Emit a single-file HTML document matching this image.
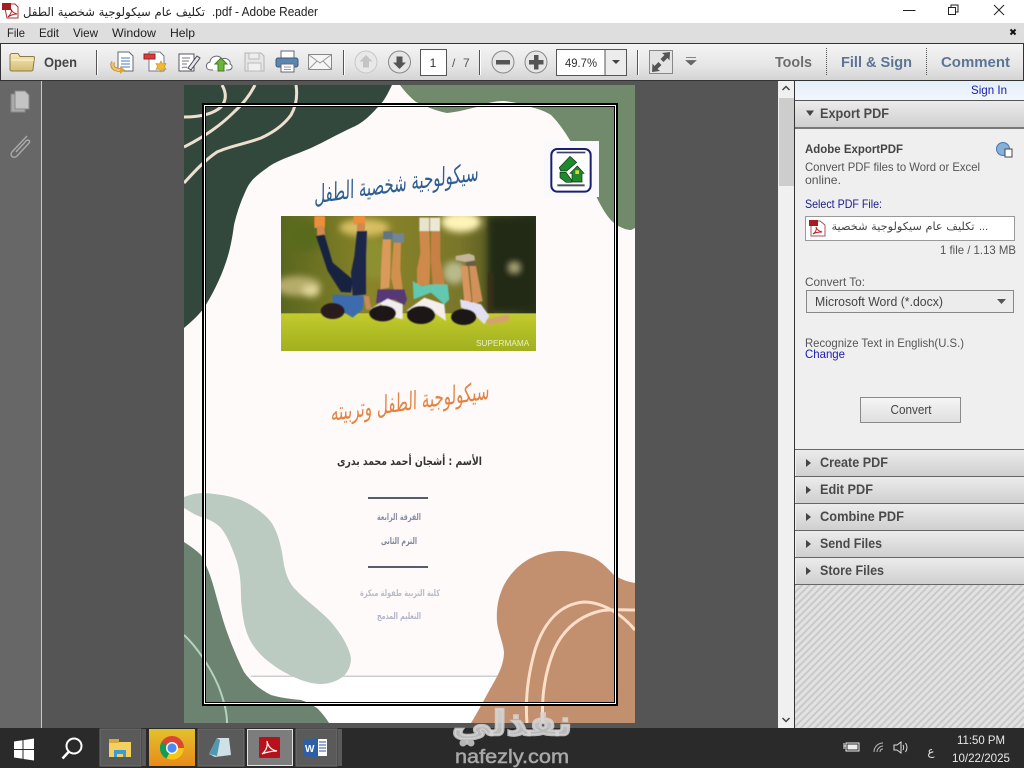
<!DOCTYPE html>
<html><head><meta charset="utf-8"><style>
html,body{margin:0;padding:0;width:1024px;height:768px;overflow:hidden;background:#555}
svg{display:block;position:absolute;left:0;top:0}
text{font-family:"Liberation Sans","DejaVu Sans",sans-serif}
.ar{font-family:"DejaVu Sans",sans-serif}
.b{font-weight:bold}
</style></head><body>
<svg width="1024" height="768" viewBox="0 0 1024 768" xmlns="http://www.w3.org/2000/svg">
<defs>
<linearGradient id="tb" x1="0" y1="0" x2="0" y2="1"><stop offset="0" stop-color="#f4f4f4"/><stop offset=".6" stop-color="#e6e6e6"/><stop offset="1" stop-color="#d4d4d4"/></linearGradient>
<linearGradient id="sec" x1="0" y1="0" x2="0" y2="1"><stop offset="0" stop-color="#ececec"/><stop offset="1" stop-color="#cfcfcf"/></linearGradient>
<linearGradient id="sign" x1="0" y1="0" x2="0" y2="1"><stop offset="0" stop-color="#e3effa"/><stop offset="1" stop-color="#f2f7fc"/></linearGradient>
<linearGradient id="btn" x1="0" y1="0" x2="0" y2="1"><stop offset="0" stop-color="#f6f6f6"/><stop offset="1" stop-color="#dedede"/></linearGradient>
<linearGradient id="chr" x1="0" y1="0" x2="0" y2="1"><stop offset="0" stop-color="#e2c22c"/><stop offset="1" stop-color="#e98a1a"/></linearGradient>
<linearGradient id="fold" x1="0" y1="0" x2="0" y2="1"><stop offset="0" stop-color="#f8eab8"/><stop offset="1" stop-color="#d3bc75"/></linearGradient>
<linearGradient id="sky" x1="0" y1="0" x2="1" y2="0"><stop offset="0" stop-color="#59661f"/><stop offset=".35" stop-color="#8a8428"/><stop offset=".7" stop-color="#7a762a"/><stop offset="1" stop-color="#2c3718"/></linearGradient>
<linearGradient id="grass" x1="0" y1="0" x2="0" y2="1"><stop offset="0" stop-color="#c3cb2e"/><stop offset=".5" stop-color="#b0bd24"/><stop offset="1" stop-color="#a2b020"/></linearGradient>
<pattern id="hatch" width="5" height="5" patternUnits="userSpaceOnUse" patternTransform="rotate(45)"><rect width="5" height="5" fill="#e2e2e2"/><rect width="2" height="5" fill="#c9c9c9"/></pattern>
<filter id="bl" x="-30%" y="-30%" width="160%" height="160%"><feGaussianBlur stdDeviation="10"/></filter>
<filter id="bl1"><feGaussianBlur stdDeviation="1.800"/></filter>
<clipPath id="pg"><rect x="184" y="85" width="451" height="638"/></clipPath>
<clipPath id="ph"><rect x="0" y="0" width="765" height="405"/></clipPath>
</defs>

<!-- title bar -->
<rect width="1024" height="23" fill="#fff"/>
<path d="M4 4h11l3 3v11H7z" fill="#fff" stroke="#a33" stroke-width="1"/><rect x="2" y="3" width="9" height="7" fill="#a31d22"/><path d="M8 17c3-3 4-6 3-8 1 3 3 4 6 5-3 0-6 1-9 3z" fill="none" stroke="#b02025" stroke-width="1"/>
<text class="ar" x="114" y="16" font-size="12" text-anchor="middle" direction="rtl" textLength="182" lengthAdjust="spacingAndGlyphs" fill="#222">تكليف عام سيكولوجية شخصية الطفل</text>
<text x="212" y="16" font-size="12.5" textLength="106" lengthAdjust="spacingAndGlyphs" fill="#222">.pdf - Adobe Reader</text>
<path d="M903 10.5h12.5" stroke="#222" stroke-width="1"/>
<path d="M948.500 7.500h7v7h-7zM951 7.500v-2.500h7v7h-2.500" fill="none" stroke="#222" stroke-width="1"/>
<path d="M994 5l10 10M1004 5l-10 10" stroke="#222" stroke-width="1"/>

<!-- menu -->
<rect y="23" width="1024" height="20" fill="#dedede"/>
<text x="7" y="37" font-size="12" fill="#222" textLength="18" lengthAdjust="spacingAndGlyphs">File</text>
<text x="39" y="37" font-size="12" fill="#222" textLength="20" lengthAdjust="spacingAndGlyphs">Edit</text>
<text x="73" y="37" font-size="12" fill="#222" textLength="25" lengthAdjust="spacingAndGlyphs">View</text>
<text x="112" y="37" font-size="12" fill="#222" textLength="44" lengthAdjust="spacingAndGlyphs">Window</text>
<text x="170" y="37" font-size="12" fill="#222" textLength="25" lengthAdjust="spacingAndGlyphs">Help</text>
<path d="M1010.500 29.500l5 5M1015.500 29.500l-5 5" stroke="#111" stroke-width="2"/>

<!-- toolbar -->
<rect y="43" width="1024" height="38" fill="#333"/>
<rect x="1" y="44" width="1022" height="36" fill="url(#tb)"/>
<path d="M10 55v14.500c0 1 1 1.500 2 1.500h19c1 0 2-.5 2-1.500l1.500-12c0-.8-.5-1-1.500-1H20l-2-3h-6c-1 0-2 1-2 2z" fill="url(#fold)" stroke="#8a7a45"/>
<path d="M11 60h23" stroke="#fff6d0"/>
<text class="b" x="44" y="67" font-size="13.500" fill="#444" textLength="33" lengthAdjust="spacingAndGlyphs">Open</text>
<path d="M96.500 50v25M343.500 50v25M479.500 50v25M637.500 50v25" stroke="#555" stroke-width="1"/>
<path d="M97.500 50v25M344.500 50v25M480.500 50v25M638.500 50v25" stroke="#fff"/>

<!-- doc icon with arrow -->
<path d="M118 52h11l4 4v15h-15z" fill="#fff" stroke="#667"/><path d="M121 58h9M121 61h9M121 64h9M121 67h9" stroke="#4a7cc0"/>
<path d="M113 62c-2 5 1 8 8 8" fill="none" stroke="#b5842c" stroke-width="4"/><path d="M113 62c-2 5 1 8 8 8" fill="none" stroke="#eec56a" stroke-width="2.400"/><path d="M120 66v8l5-4z" fill="#dca53a"/>
<!-- new doc -->
<path d="M149 52h11l4 4v15h-15z" fill="#fff" stroke="#778"/><rect x="144" y="54" width="11" height="5" fill="#d83b3b" stroke="#922"/>
<path d="M161 61l1.500 3 3.500-.5-1.500 3 1.500 3-3.500-.5-1.500 3-1.500-3-3.500.5 1.500-3-1.500-3 3.500.5z" fill="#f2b935" stroke="#c48a1a" stroke-width=".6"/>
<!-- sign -->
<path d="M179 54h15v17h-15z" fill="#fff" stroke="#556"/><path d="M182 58h8M182 61h7M182 64h5M182 68c2-2 3 0 5-1" stroke="#777" fill="none"/><path d="M188 68l9-12 3 2-9 12z" fill="#e8e8e8" stroke="#445"/>
<!-- cloud -->
<path d="M213 70h-2c-6 0-6-7-1-8 0-6 9-8 12-3 5-2 9 2 8 5 3 1 3 6-2 6h-2" fill="#fff" stroke="#667"/><path d="M221 58l6 6h-3v7h-6v-7h-3z" fill="#6cb33f" stroke="#3f7f20"/>
<!-- save disabled -->
<path d="M245 53h16l3 3v15h-19z" fill="#e6e6e6" stroke="#b4b4b4"/><rect x="249" y="53" width="10" height="6" fill="#eee" stroke="#bbb"/><rect x="248" y="63" width="13" height="8" fill="#f0f0f0" stroke="#bbb"/>
<!-- print -->
<rect x="281" y="51" width="13" height="8" fill="#fff" stroke="#667"/><rect x="276" y="58" width="22" height="9" rx="2" fill="#5b86ad" stroke="#3c5c7c"/><rect x="281" y="64" width="13" height="8" fill="#fff" stroke="#667"/><path d="M284 67h7M284 69.500h7" stroke="#999"/>
<!-- mail -->
<rect x="308.500" y="54.500" width="23" height="15" fill="#f5f5f5" stroke="#888"/><path d="M309 55l11 8 11-8M309 69l8-8M331 69l-8-8" fill="none" stroke="#999"/>

<!-- nav circles -->
<circle cx="366" cy="62" r="11" fill="#e8e8e8" stroke="#c8c8c8"/><path d="M366 55l6.500 6.500h-3.500v6h-6v-6h-3.500z" fill="#c4c4c4"/>
<circle cx="399.500" cy="62" r="11" fill="#e6e6e6" stroke="#888"/><path d="M399.500 69l-6.500-6.500h3.500v-6h6v6h3.500z" fill="#555"/>
<rect x="420.500" y="49.500" width="26" height="26" fill="#fff" stroke="#555"/>
<text x="433" y="67" font-size="12" text-anchor="middle" fill="#333">1</text>
<text x="452" y="67" font-size="12" fill="#555">/</text><text x="463" y="67" font-size="12" fill="#555">7</text>
<circle cx="503" cy="62" r="11" fill="#e6e6e6" stroke="#888"/><rect x="496" y="60" width="14" height="4.500" fill="#555"/>
<circle cx="536" cy="62" r="11" fill="#e6e6e6" stroke="#888"/><path d="M534 55h4.500v5h5v4.500h-5v5H534v-5h-5V60h5z" fill="#555"/>
<rect x="556.500" y="49.500" width="70" height="26" fill="#fff" stroke="#555"/>
<rect x="605" y="50" width="21" height="25" fill="#ececec"/><path d="M605 50v25" stroke="#555"/>
<text x="565" y="67" font-size="12" fill="#333" textLength="32" lengthAdjust="spacingAndGlyphs">49.7%</text>
<path d="M612 60h8l-4 4z" fill="#444"/>
<rect x="649.500" y="50.500" width="23" height="23" fill="#e4e4e4" stroke="#888"/>
<path d="M670 52l-8 1 2.500 2-4 4 3 3 4-4 2 2.500zM652 72l8-1-2.500-2 4-4-3-3-4 4-2-2.500z" fill="#555"/>
<path d="M686 57.500h10M686 60.500h10l-5 4.500z" fill="#666" stroke="#666" stroke-width=".7"/>
<text class="b" x="775" y="67" font-size="14.500" fill="#6e6e6e" textLength="37" lengthAdjust="spacingAndGlyphs">Tools</text>
<path d="M826.500 48v27M926.500 48v27" stroke="#555" stroke-dasharray="1 1"/>
<text class="b" x="841" y="67" font-size="14.500" fill="#5c7596" textLength="71" lengthAdjust="spacingAndGlyphs">Fill &amp; Sign</text>
<text class="b" x="941" y="67" font-size="14.500" fill="#5c7596" textLength="69" lengthAdjust="spacingAndGlyphs">Comment</text>

<!-- viewport -->
<rect x="0" y="81" width="1024" height="647" fill="#555"/>
<rect x="0" y="81" width="41" height="647" fill="#676767"/>
<rect x="41" y="81" width="1" height="647" fill="#c8c8c8"/>
<path d="M11 94h8v14h6v4H11z" fill="#aaa" stroke="#888"/><path d="M15 91h10l4 4v14H15z" fill="#c4c4c4" stroke="#8a8a8a"/>
<path d="M27 136l-15 16c-3 4 2 7 5 4l12-13c2-2-1-4-3-2l-10 11" fill="none" stroke="#aaa" stroke-width="1.400"/>

<!-- PDF page -->
<rect x="184" y="85" width="451" height="638" fill="#fffafa"/>
<g clip-path="url(#pg)">
<rect x="251" y="677" width="260" height="46" fill="#fff"/>
<rect x="251" y="675.500" width="247" height="1.500" fill="#cfcfcf"/>
<path d="M184 85H392C388 93 384 102 377 108C368 118 361 124 351 128C338 134 324 142 311 148C295 155 277 160 267 168C257 175 251 180 247 188C240 203 237 213 234 225C232 240 230 250 226 262C220 280 212 295 204 308C198 316 191 322 184 328Z" fill="#33483c"/>
<path d="M400 85C405 92 410 97 416 102C425 106 436 111 447 113C458 112 468 109 477 107C486 103 495 101 504 101C514 102 523 104 531 107C538 109 545 111 551 115C559 123 565 132 571 142C581 160 589 180 597 198C602 208 607 217 614 223C619 227 626 230 631 230L635 228V85Z" fill="#718a6b"/>
<g fill="none" stroke="#efdfcf" stroke-width="3">
<path d="M222 85C226 92 227 100 221 107C212 115 198 117 184 117"/>
<path d="M255 85C250 95 243 104 234 112C220 126 202 138 184 147"/>
<path d="M296 85C298 98 295 108 291 115C283 126 272 133 261 138C245 144 230 146 217 152C205 160 194 172 184 183"/>
</g>
<path d="M184 497C192 494 198 493 204 493C218 494 231 496 241 500C254 506 265 514 271 522C279 534 282 550 284 565C286 575 289 582 294 588C305 600 320 610 331 622C342 635 349 647 351 658C351 667 347 674 341 678C335 682 328 684 321 684C308 684 295 678 284 672C270 664 258 654 251 642C244 630 242 613 241 598C241 584 240 572 237 562C233 550 228 537 221 528C215 522 208 519 201 517C195 515 189 511 184 508Z" fill="#bccbc2"/>
<path d="M184 542C190 546 196 550 201 555C207 566 211 577 214 588C218 602 222 618 227 632C232 646 238 660 244 672C252 683 261 690 271 695C281 698 291 699 301 700C307 702 312 705 317 708C322 713 326 718 329 723H184Z" fill="#6b8370"/>
<path d="M184 635C197 647 210 667 218 685C224 700 227 712 227 723" fill="none" stroke="#b5d2c0" stroke-width="2"/>
<path d="M471 723C478 712 486 696 494 682C500 672 504 662 504 652C503 642 498 632 497 622C496 607 499 595 504 585C511 572 521 563 531 558C541 553 551 551 561 551C573 551 585 554 594 558C602 562 608 569 614 575C620 579 628 582 635 583V723Z" fill="#c28f6f"/>
<g fill="none" stroke="#fcdfc9" stroke-width="3">
<path d="M527 723C525 700 528 675 535 650C544 622 560 604 584 602C602 602 622 614 635 630"/>
<path d="M543 723C541 698 545 672 554 650C564 628 580 616 600 611C612 609 624 610 635 610"/>
</g>

<!-- logo (coordinates in 3x crop space) -->
<rect x="544" y="141" width="55" height="56" fill="#f9f9fb"/>
<g transform="translate(184 85) scale(.33333)">
<rect x="1102" y="192" width="118" height="128" rx="18" fill="#fff" stroke="#1c1f6e" stroke-width="6"/>
<rect x="1118" y="200" width="86" height="5" fill="#3a3f66"/><rect x="1120" y="298" width="82" height="6" fill="#4a5060"/>
<path d="M1126 248l32-34 20 18-30 26h-18z" fill="#1f8a2c" stroke="#0b2e12" stroke-width="2"/>
<path d="M1128 262h18l16 22v8h-16l-18-14z" fill="#1f8a2c" stroke="#0b2e12" stroke-width="2"/>
<path d="M1180 243l20 22h-6v26h-30v-26h-6z" fill="#1f8a2c" stroke="#0b2e12" stroke-width="2"/><rect x="1174" y="256" width="11" height="11" fill="#e8d23c"/>
</g>

<!-- page titles -->
<text class="ar" x="395" y="192" transform="rotate(-8 395 182)" font-size="25" font-style="italic" fill="#2c5f92" text-anchor="middle" direction="rtl" textLength="166" lengthAdjust="spacingAndGlyphs">سيكولوجية شخصية الطفل</text>

<!-- photo -->
<g transform="translate(281 216) scale(.33333)">
<g clip-path="url(#ph)">
<rect width="765" height="405" fill="url(#sky)"/>
<g filter="url(#bl)">
<ellipse cx="540" cy="18" rx="60" ry="30" fill="#fff4b8"/>
<ellipse cx="250" cy="35" rx="75" ry="25" fill="#d8bf62"/>
<ellipse cx="70" cy="60" rx="60" ry="50" fill="#5a6a1f"/>
<rect x="620" y="0" width="145" height="290" fill="#202c14"/>
<ellipse cx="50" cy="210" rx="70" ry="30" fill="#b6ac6a"/>
<ellipse cx="90" cy="225" rx="26" ry="18" fill="#e2d79a"/>
<ellipse cx="520" cy="170" rx="34" ry="34" fill="#b9ba8c"/>
<ellipse cx="280" cy="130" rx="50" ry="60" fill="#8d9030"/>
<ellipse cx="700" cy="155" rx="14" ry="12" fill="#c9c48a"/>
</g>
<rect x="620" y="170" width="18" height="125" fill="#3a2f18" fill-opacity=".7"/>
<rect y="292" width="765" height="113" fill="url(#grass)"/>
<g filter="url(#bl1)">
<!-- kid 1 -->
<rect x="100" y="0" width="32" height="36" rx="3" fill="#ee8e3a"/><rect x="218" y="0" width="34" height="25" fill="#ee8e3a"/>
<path d="M108 30h22l2 28h-24z" fill="#cf8a50"/><path d="M228 22h24v26h-24z" fill="#cf8a50"/>
<path d="M105 60L130 55L155 140L215 190L210 230L180 228L140 165Z" fill="#17233f"/>
<path d="M228 45H258L255 120L255 235L215 240L210 170L220 120Z" fill="#1a2848"/>
<path d="M155 235L250 240L245 280L215 305L190 290L155 260Z" fill="#3c6cae"/>
<path d="M248 240l16 0 6 36-14 6z" fill="#c98a58"/>
<ellipse cx="155" cy="285" rx="36" ry="24" fill="#2a1c1c"/>
<!-- kid 2 -->
<path d="M305 70H330L328 170L325 215L298 220L300 160Z" fill="#d99a5c"/>
<path d="M338 80H360L358 160L365 220L340 225L330 185Z" fill="#d2904f"/>
<path d="M307 46h28v24h-28z" fill="#5f7484"/><path d="M335 52h34v28h-34z" fill="#718694"/>
<path d="M290 220L370 220L378 250L370 268L340 250L285 262Z" fill="#553774"/>
<path d="M262 282L320 248L365 265L365 310L345 305L300 265Z" fill="#f2ecef"/>
<ellipse cx="305" cy="292" rx="40" ry="24" fill="#1a1212"/>
<!-- kid 3 -->
<path d="M415 45H445L448 130L445 205L408 210L408 160L418 110Z" fill="#cf8a4c"/>
<path d="M450 45H478L478 130L492 210L455 205L450 140Z" fill="#c78144"/>
<rect x="415" y="5" width="30" height="40" fill="#e8e4cf"/><rect x="447" y="5" width="30" height="40" fill="#ece8d4"/>
<path d="M395 195L420 210L450 205L500 205L505 250L490 265L450 230L398 250Z" fill="#62c8b0"/>
<path d="M375 285L430 245L490 265L495 315L460 290L430 270Z" fill="#f4efec"/>
<ellipse cx="420" cy="297" rx="42" ry="27" fill="#1a1212"/>
<!-- kid 4 -->
<path d="M540 150H560L572 255L550 260Z" fill="#d8955e"/>
<path d="M565 150H585L605 255L575 265Z" fill="#d2905a"/>
<path d="M524 120l40-7 16 6 2 14-30 5-28-6z" fill="#c5b59c"/><path d="M555 138h28v12h-28z" fill="#6a5a48"/>
<path d="M537 250L600 265L625 300L610 325L570 285L540 275Z" fill="#e2dff2"/>
<path d="M615 312l62-16 10 6-6 14-60 10z" fill="#d6a070"/>
<ellipse cx="548" cy="303" rx="38" ry="24" fill="#1e1414"/>
</g>
<text x="585" y="390" font-size="24" fill="#e9efc8" textLength="160" lengthAdjust="spacingAndGlyphs">SUPERMAMA</text>
</g>
</g>

<text class="ar" x="409" y="410" transform="rotate(-8 409 402)" font-size="25" font-style="italic" fill="#e38343" text-anchor="middle" direction="rtl" textLength="160" lengthAdjust="spacingAndGlyphs">سيكولوجية الطفل وتربيته</text>
<text class="ar b" x="409.500" y="465" font-size="11.500" fill="#333" text-anchor="middle" direction="rtl" textLength="145" lengthAdjust="spacingAndGlyphs">الأسم : أشجان أحمد محمد بدرى</text>
<rect x="368" y="497" width="60" height="2" fill="#565d6d"/>
<rect x="368" y="566" width="60" height="2" fill="#565d6d"/>
<text class="ar b" x="399" y="520" font-size="9" fill="#8a8fa8" text-anchor="middle" direction="rtl" textLength="44" lengthAdjust="spacingAndGlyphs">الفرقة الرابعة</text>
<text class="ar b" x="399" y="544" font-size="9" fill="#80859c" text-anchor="middle" direction="rtl" textLength="36" lengthAdjust="spacingAndGlyphs">الترم الثانى</text>
<text class="ar b" x="400" y="596" font-size="9" fill="#b8bccb" text-anchor="middle" direction="rtl" textLength="80" lengthAdjust="spacingAndGlyphs">كلية التربية طفولة مبكرة</text>
<text class="ar b" x="399" y="619" font-size="9" fill="#b0b4c6" text-anchor="middle" direction="rtl" textLength="44" lengthAdjust="spacingAndGlyphs">التعليم المدمج</text>

<!-- frame -->
<rect x="203" y="104" width="414" height="601" fill="none" stroke="#000" stroke-width="2"/>
<rect x="204.500" y="105.500" width="411" height="598" fill="none" stroke="#fff" stroke-width="1"/>
<rect x="205.500" y="106.500" width="409" height="596" fill="none" stroke="#000" stroke-width="1"/>
</g>

<!-- scrollbar -->
<rect x="778" y="81" width="17" height="647" fill="#f0f0f0"/>
<rect x="779" y="98" width="15" height="88" fill="#cdcdcd"/>
<path d="M782.500 90l3.500-3.500 3.500 3.500" fill="none" stroke="#444" stroke-width="1.500"/>
<path d="M782.500 718l3.500 3.500 3.500-3.500" fill="none" stroke="#444" stroke-width="1.500"/>
<rect x="794" y="81" width="1" height="647" fill="#333"/>

<!-- right panel -->
<rect x="795" y="81" width="229" height="503" fill="#efefef"/>
<rect x="795" y="81" width="229" height="20" fill="url(#sign)"/>
<text x="971" y="94" font-size="12" fill="#1a1ab0" textLength="36" lengthAdjust="spacingAndGlyphs">Sign In</text>
<rect x="795" y="100" width="229" height="1" fill="#555"/>
<rect x="795" y="101" width="229" height="26" fill="url(#sec)"/>
<rect x="795" y="127" width="229" height="2" fill="#777"/>
<path d="M806 110.500h8l-4 5.500z" fill="#444"/>
<text class="b" x="820" y="118" font-size="14" fill="#4a4a4a" textLength="69" lengthAdjust="spacingAndGlyphs">Export PDF</text>
<text class="b" x="805" y="153" font-size="12" fill="#444" textLength="98" lengthAdjust="spacingAndGlyphs">Adobe ExportPDF</text>
<circle cx="1003" cy="149" r="6.500" fill="#86b0dc" stroke="#4a78ad"/><rect x="1005" y="149" width="7" height="8" fill="#fff" stroke="#445"/>
<text x="805" y="171" font-size="12" fill="#555" textLength="175" lengthAdjust="spacingAndGlyphs">Convert PDF files to Word or Excel</text>
<text x="805" y="184" font-size="12" fill="#555" textLength="36" lengthAdjust="spacingAndGlyphs">online.</text>
<text x="805" y="208" font-size="12" fill="#1a1a8c" textLength="77" lengthAdjust="spacingAndGlyphs">Select PDF File:</text>
<rect x="805.500" y="216.500" width="209" height="24" fill="#fff" stroke="#999"/>
<path d="M811 221h9l5 4v11h-14z" fill="#fff" stroke="#a55"/><rect x="809" y="220" width="9" height="6" fill="#a31d22"/><path d="M813 234c3-2 4-5 3-7 1 3 3 4 6 5-3 0-6 0-9 2z" fill="none" stroke="#b02025"/>
<text class="ar" x="903" y="230" font-size="11" fill="#444" text-anchor="middle" textLength="143" lengthAdjust="spacingAndGlyphs" direction="rtl">تكليف عام سيكولوجية شخصية</text>
<text x="979" y="230" font-size="11" fill="#444">...</text>
<text x="940" y="254" font-size="12" fill="#555" textLength="76" lengthAdjust="spacingAndGlyphs">1 file / 1.13 MB</text>
<text x="805" y="286" font-size="12" fill="#555" textLength="60" lengthAdjust="spacingAndGlyphs">Convert To:</text>
<rect x="806.500" y="290.500" width="207" height="22" fill="#ececec" stroke="#888"/>
<text x="815" y="306" font-size="12.500" fill="#444" textLength="128" lengthAdjust="spacingAndGlyphs">Microsoft Word (*.docx)</text>
<path d="M997 299h9l-4.500 5z" fill="#555"/>
<text x="805" y="347" font-size="12" fill="#555" textLength="159" lengthAdjust="spacingAndGlyphs">Recognize Text in English(U.S.)</text>
<text x="805" y="358" font-size="12" fill="#1a1ab0" textLength="40" lengthAdjust="spacingAndGlyphs">Change</text>
<rect x="860.500" y="397.500" width="100" height="25" fill="url(#btn)" stroke="#8a8a8a"/>
<text x="911" y="414" font-size="12.500" fill="#444" text-anchor="middle" textLength="41" lengthAdjust="spacingAndGlyphs">Convert</text>

<g fill="url(#sec)"><rect x="796" y="450" width="228" height="26"/><rect x="796" y="477" width="228" height="26"/><rect x="796" y="504" width="228" height="26"/><rect x="796" y="531" width="228" height="26"/><rect x="796" y="558" width="228" height="26"/></g>
<g fill="#666"><rect x="795" y="449" width="229" height="1"/><rect x="795" y="476" width="229" height="1"/><rect x="795" y="503" width="229" height="1"/><rect x="795" y="530" width="229" height="1"/><rect x="795" y="557" width="229" height="1"/><rect x="795" y="584" width="229" height="1"/></g>
<g fill="#444"><path d="M806 459v8l5-4zM806 486v8l5-4zM806 513v8l5-4zM806 540v8l5-4zM806 567v8l5-4z"/></g>
<g font-size="14" fill="#4a4a4a">
<text class="b" x="820" y="467" textLength="68" lengthAdjust="spacingAndGlyphs">Create PDF</text>
<text class="b" x="820" y="494" textLength="53" lengthAdjust="spacingAndGlyphs">Edit PDF</text>
<text class="b" x="820" y="521" textLength="84" lengthAdjust="spacingAndGlyphs">Combine PDF</text>
<text class="b" x="820" y="548" textLength="62" lengthAdjust="spacingAndGlyphs">Send Files</text>
<text class="b" x="820" y="575" textLength="64" lengthAdjust="spacingAndGlyphs">Store Files</text>
</g>
<rect x="795" y="585" width="229" height="143" fill="url(#hatch)"/>

<!-- taskbar -->
<rect y="728" width="1024" height="40" fill="#2a2a2a"/>
<path d="M14 741.500l8.500-1.200v8.700H14zM23.500 740.100L34 738.500v10.500H23.500zM14 750h8.500v8.700L14 757.500zM23.500 750H34v10.500l-10.500-1.500z" fill="#fff"/>
<circle cx="74" cy="746" r="7.500" fill="none" stroke="#fff" stroke-width="2"/><path d="M68.500 752l-6 6.500" stroke="#fff" stroke-width="2.500"/>
<rect x="100" y="729" width="41" height="37" fill="#5a5a5a" stroke="#6e6e6e"/><rect x="142" y="729" width="4" height="37" fill="#5a5a5a"/>
<path d="M109 740h7l2 2h13v15h-22z" fill="#f3d060"/><rect x="109" y="739" width="10" height="4" fill="#d8a838"/><path d="M114 750h12v7h-12z" fill="#3d9ad8"/><rect x="117" y="754" width="6" height="3" fill="#f3d060"/>
<rect x="149" y="729" width="46" height="37" fill="url(#chr)"/>
<circle cx="172" cy="748" r="12" fill="#db4437"/><path d="M172 748l-10.400 6a12 12 0 0 1 0-12z M172 748l-10.400 6a12 12 0 0 0 16 4.400z" fill="#0f9d58"/><path d="M172 748h12a12 12 0 0 1-17.500 10.500z" fill="#f5c518"/><circle cx="172" cy="748" r="6" fill="#fff"/><circle cx="172" cy="748" r="4.600" fill="#4a8af4"/>
<rect x="198" y="729" width="46" height="37" fill="#5a5a5a" stroke="#6e6e6e"/>
<path d="M217 738h12l2 17-16 2 -6-3z" fill="#cfe0e6"/><path d="M217 738l-8 16 8 2 3-16z" fill="#4f9ab0"/>
<rect x="247.500" y="729.500" width="45" height="36" fill="#7d7d7d" stroke="#e2e2e2"/>
<rect x="259" y="737" width="21" height="21" rx="1" fill="#b5121b"/><path d="M262 754c4-3 6-8 5-13 1 5 4 9 10 10-5 0-10 1-15 3z" fill="none" stroke="#fff" stroke-width="1.200"/>
<rect x="296" y="729" width="41" height="37" fill="#5a5a5a" stroke="#6e6e6e"/><rect x="338" y="729" width="4" height="37" fill="#5a5a5a"/>
<rect x="317" y="739" width="10" height="17" fill="#fff"/><path d="M319 742h7M319 745h7M319 748h7M319 751h7" stroke="#2b5797"/>
<path d="M304 740l14-2v20l-14-2z" fill="#2b5fa8"/><text class="b" x="305" y="752" font-size="10" fill="#fff">W</text>

<!-- tray -->
<rect x="846" y="743" width="13" height="8" fill="none" stroke="#eee"/><rect x="847.500" y="744.500" width="10" height="5" fill="#eee"/><path d="M846 746h-2M844 743v6" stroke="#eee"/>
<path d="M874 752c0-5 4-9 9-9M877 752c0-3 3-6 6-6M880 752c0-2 1-3 3-3" fill="none" stroke="#bbb"/>
<path d="M894 745h3l4-3v11l-4-3h-3zM903 745c1 2 1 3 0 5M905.500 743c2 3 2 6 0 9" fill="none" stroke="#ddd"/>
<text class="ar" x="931" y="755" font-size="12" fill="#ddd" text-anchor="middle">ع</text>
<text x="981" y="744" font-size="12" fill="#e8e8e8" text-anchor="middle" textLength="48" lengthAdjust="spacingAndGlyphs">11:50 PM</text>
<text x="981" y="762" font-size="12" fill="#e8e8e8" text-anchor="middle" textLength="58" lengthAdjust="spacingAndGlyphs">10/22/2025</text>

<!-- watermark -->
<text class="ar b" x="512" y="735" font-size="34" fill="#d4d4d4" fill-opacity=".85" stroke="#d4d4d4" stroke-opacity=".85" stroke-width="2.500" text-anchor="middle" direction="rtl" textLength="120" lengthAdjust="spacingAndGlyphs">نفذلي</text>
<circle cx="463" cy="743" r="3.500" fill="#b5b5b5"/><circle cx="471" cy="743" r="3.500" fill="#b5b5b5"/>
<text x="455" y="763" font-size="19" fill="#a8a8a8" stroke="#a8a8a8" stroke-width=".5" textLength="114" lengthAdjust="spacingAndGlyphs">nafezly.com</text>
</svg>
</body></html>
